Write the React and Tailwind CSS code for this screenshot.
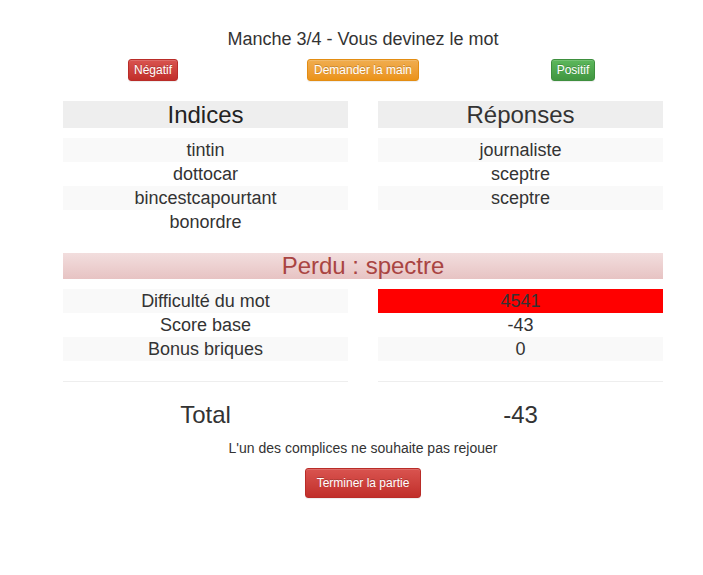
export default function App() {
  const indices = ["tintin", "dottocar", "bincestcapourtant", "bonordre"];
  const reponses = ["journaliste", "sceptre", "sceptre"];
  const scores = [
    ["Difficulté du mot", "4541"],
    ["Score base", "-43"],
    ["Bonus briques", "0"],
  ];

  const btnBase =
    "inline-block rounded-[3px] border text-white text-[12px] leading-[18px] [text-shadow:0_-1px_0_rgba(0,0,0,0.2)] shadow-[inset_0_1px_0_rgba(255,255,255,0.15),0_1px_1px_rgba(0,0,0,0.075)]";

  return (
    <div className="w-[703px] min-h-[575px] bg-white text-[#333] font-['Liberation_Sans',Arial,sans-serif]">
      <div className="ml-[48px] w-[630px]">
        <div className="pt-[29px] text-center text-[18px] leading-[20px]">
          Manche 3/4 - Vous devinez le mot
        </div>

        <div className="mt-[8px] grid grid-cols-3">
          <div className="px-[15px] text-center">
            <span className={`${btnBase} px-[5px] py-px bg-gradient-to-b from-[#d9534f] to-[#c12e2a] border-[#b92c28]`}>
              Négatif
            </span>
          </div>
          <div className="px-[15px] text-center">
            <span className={`${btnBase} px-[6px] py-px bg-gradient-to-b from-[#f0ad4e] to-[#eb9316] border-[#e38d13]`}>
              Demander la main
            </span>
          </div>
          <div className="px-[15px] text-center">
            <span className={`${btnBase} px-[5px] py-px bg-gradient-to-b from-[#5cb85c] to-[#419641] border-[#3e8f3e]`}>
              Positif
            </span>
          </div>
        </div>

        <div className="mt-[20px] grid grid-cols-2">
          <div className="px-[15px]">
            <div className="h-[27px] bg-[#eeeeee] text-center text-[24px] leading-[27px] text-[#222]">
              Indices
            </div>
            <div className="mt-[10px]">
              {indices.map((w, i) => (
                <div
                  key={i}
                  className={`h-6 text-center text-[18px] leading-6 ${i % 2 === 0 ? "bg-[#f9f9f9]" : ""}`}
                >
                  {w}
                </div>
              ))}
            </div>
          </div>
          <div className="px-[15px]">
            <div className="h-[27px] bg-[#eeeeee] text-center text-[24px] leading-[27px]">
              Réponses
            </div>
            <div className="mt-[10px]">
              {reponses.map((w, i) => (
                <div
                  key={i}
                  className={`h-6 text-center text-[18px] leading-6 ${i % 2 === 0 ? "bg-[#f9f9f9]" : ""}`}
                >
                  {w}
                </div>
              ))}
            </div>
          </div>
        </div>

        <div className="mx-[15px] mt-[19px] h-[26px] bg-gradient-to-b from-[#f2dede] to-[#e7c3c3] text-center text-[24px] leading-[26px] text-[#a94442]">
          Perdu : spectre
        </div>

        <div className="mt-[10px] grid grid-cols-2">
          <div className="px-[15px]">
            {scores.map(([label], i) => (
              <div
                key={i}
                className={`h-6 text-center text-[18px] leading-6 ${i % 2 === 0 ? "bg-[#f9f9f9]" : ""}`}
              >
                {label}
              </div>
            ))}
            <div className="mt-[20px] border-t border-[#eeeeee]" />
            <div className="mt-[20px] h-[26px] text-center text-[24px] leading-[26px]">
              Total
            </div>
          </div>
          <div className="px-[15px]">
            {scores.map(([, value], i) => (
              <div
                key={i}
                className={`h-6 text-center text-[18px] leading-6 ${
                  i === 0 ? "bg-[#ff0000]" : i % 2 === 0 ? "bg-[#f9f9f9]" : ""
                }`}
              >
                {value}
              </div>
            ))}
            <div className="mt-[20px] border-t border-[#eeeeee]" />
            <div className="mt-[20px] h-[26px] text-center text-[24px] leading-[26px]">
              -43
            </div>
          </div>
        </div>

        <div className="mt-[10px] text-center text-[14px] leading-5">
          L'un des complices ne souhaite pas rejouer
        </div>

        <div className="mt-[10px] text-center">
          <span className={`${btnBase} px-[11px] py-[5px] bg-gradient-to-b from-[#d9534f] to-[#c12e2a] border-[#b92c28]`}>
            Terminer la partie
          </span>
        </div>
      </div>
    </div>
  );
}
